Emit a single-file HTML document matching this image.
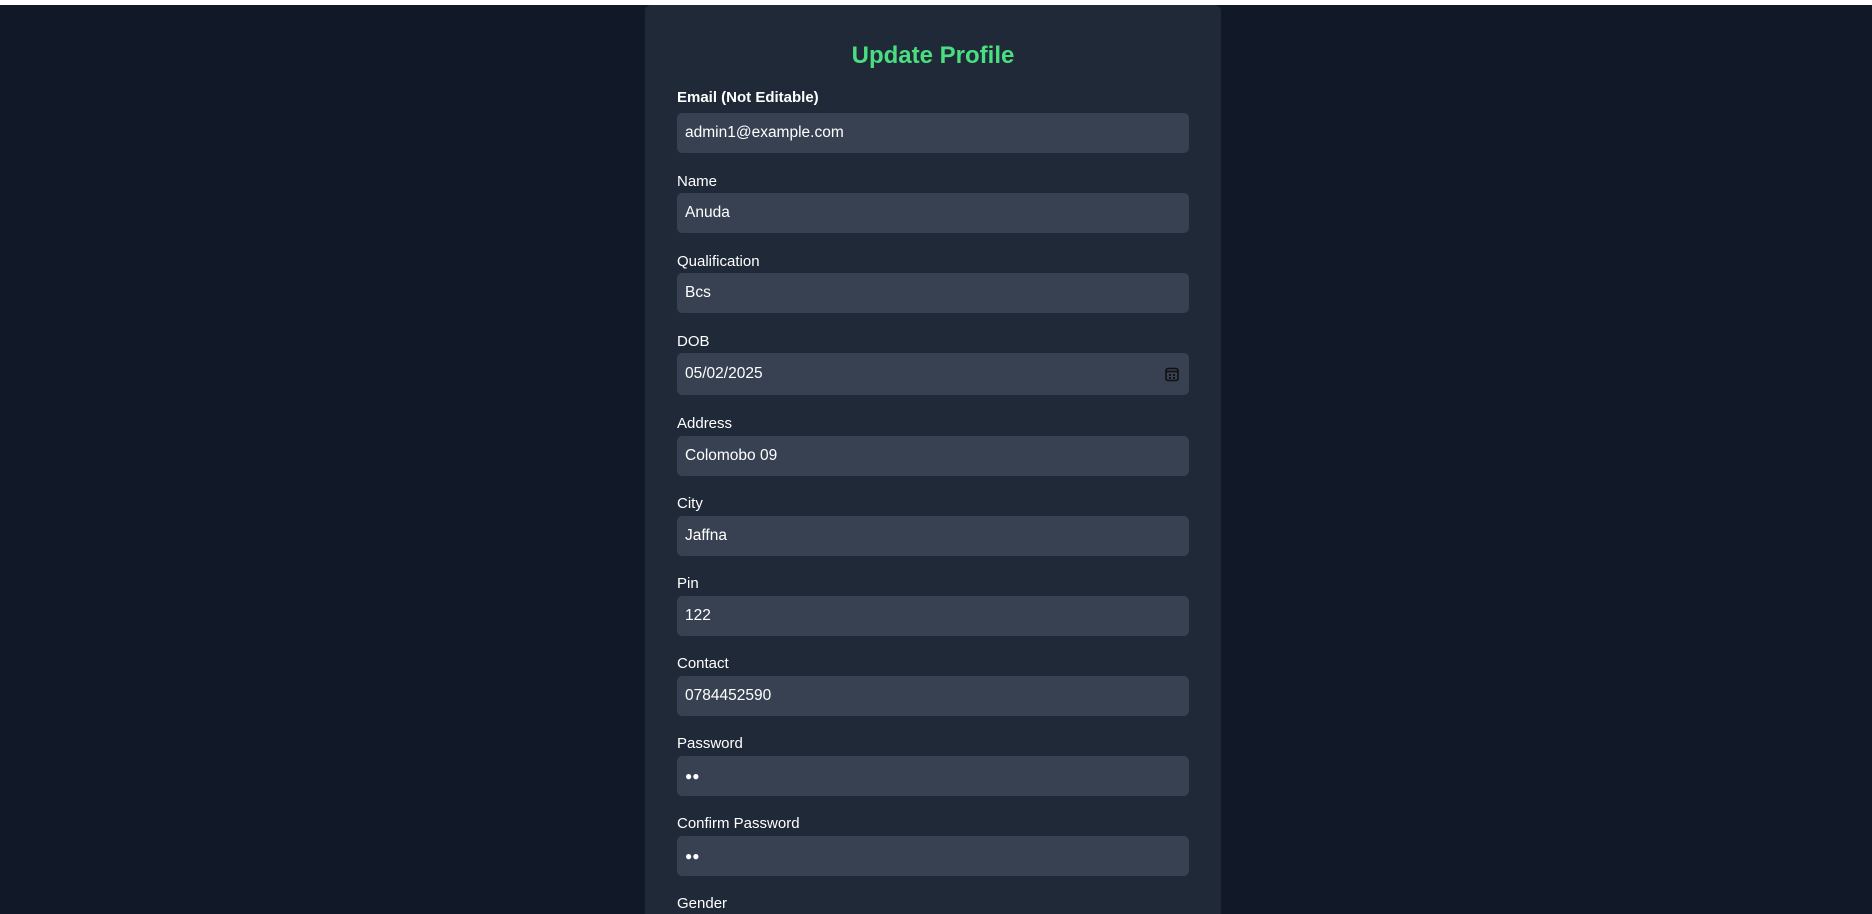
<!DOCTYPE html>
<html><head><meta charset="utf-8"><style>
html,body{margin:0;padding:0;width:1872px;height:914px;overflow:hidden;}
body{background:#111827;position:relative;font-family:"Liberation Sans",sans-serif;color:#fff;}
.top{position:absolute;left:0;top:0;width:1872px;height:5px;background:#fff;}
.card{position:absolute;left:645px;top:5px;width:576px;height:909px;background:#1f2937;border-radius:6px 6px 0 0;}
h1{position:absolute;left:645px;width:576px;top:41px;margin:0;text-align:center;font-size:24px;font-weight:bold;color:#4ade80;line-height:30px;}
.l{position:absolute;left:677px;font-size:15px;line-height:20px;}
.i{position:absolute;left:677px;width:512px;height:40px;background:#374151;border-radius:5px;font-size:15.5px;line-height:40px;box-sizing:border-box;padding-left:8px;}
</style></head><body>
<div class="top"></div>
<div class="card"></div>
<h1>Update Profile</h1>
<div class="l" style="top:88px;font-weight:bold">Email (Not Editable)</div>
<div class="i" style="top:113px">admin1@example.com</div>
<div class="l" style="top:172px">Name</div>
<div class="i" style="top:193px">Anuda</div>
<div class="l" style="top:252px">Qualification</div>
<div class="i" style="top:273px">Bcs</div>
<div class="l" style="top:332px">DOB</div>
<div class="i" style="top:353px;height:42px;line-height:42px">05/02/2025
<svg style="position:absolute;right:10px;top:14px" width="14" height="15" viewBox="0 0 14 15"><rect x="1" y="1.5" width="12" height="12" rx="2" fill="none" stroke="#111" stroke-width="1.6"/><line x1="1" y1="4.5" x2="13" y2="4.5" stroke="#111" stroke-width="1.6"/><rect x="4" y="7" width="2" height="2" fill="#111"/><rect x="8" y="7" width="2" height="2" fill="#111"/><rect x="4" y="10" width="2" height="2" fill="#111"/><rect x="8" y="10" width="2" height="2" fill="#111"/></svg></div>
<div class="l" style="top:414px">Address</div>
<div class="i" style="top:436px">Colomobo 09</div>
<div class="l" style="top:494px">City</div>
<div class="i" style="top:516px">Jaffna</div>
<div class="l" style="top:574px">Pin</div>
<div class="i" style="top:596px">122</div>
<div class="l" style="top:654px">Contact</div>
<div class="i" style="top:676px">0784452590</div>
<div class="l" style="top:734px">Password</div>
<div class="i" style="top:756px;font-size:12px">●●</div>
<div class="l" style="top:814px">Confirm Password</div>
<div class="i" style="top:836px;font-size:12px">●●</div>
<div class="l" style="top:894px">Gender</div>
</body></html>
